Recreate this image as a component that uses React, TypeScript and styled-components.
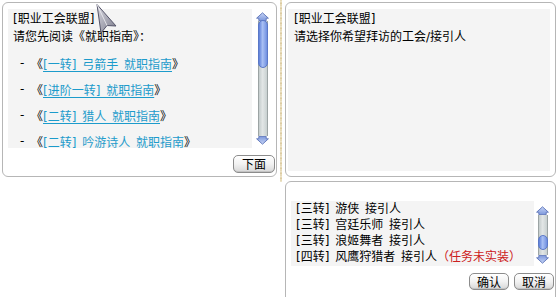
import React from "react";
import styled, { createGlobalStyle } from "styled-components";

const Global = createGlobalStyle`
  html, body { margin: 0; padding: 0; background: #ffffff; }
  body {
    font-family: "DejaVu Sans", "Noto Sans CJK SC", sans-serif;
    font-size: 12px;
    color: #000;
    word-spacing: 2px;
  }
`;

const Page = styled.div`
  position: relative;
  width: 560px;
  height: 297px;
  overflow: hidden;
  display: flex;
  align-items: flex-start;
  padding-top: 2px;
  box-sizing: border-box;
`;

const Panel = styled.div<{ $w: number; $h: number }>`
  box-sizing: border-box;
  width: ${(p) => p.$w}px;
  height: ${(p) => p.$h}px;
  border: 1px solid #b6b6b6;
  border-radius: 6px;
  background: #ffffff;
  display: flex;
  flex-direction: column;
`;

const LeftPanel = styled(Panel)`
  margin-left: 2px;
  padding: 6px 1px 0 5px;
`;

const Divider = styled.div`
  width: 2px;
  height: 182px;
  margin: -2px 0 0 3px;
  background: repeating-linear-gradient(
    180deg,
    #e2d4ae 0px,
    #f1e9d2 2px,
    #d6c394 3px,
    #eee4c8 5px
  );
`;

const RightCol = styled.div`
  margin-left: 3px;
  display: flex;
  flex-direction: column;
  gap: 4px;
`;

const TopPanel = styled(Panel)`
  padding: 6px 4px 0 2px;
`;

const BottomPanel = styled(Panel)`
  padding: 19px 1px 0 5px;
`;

const Body = styled.div`
  display: flex;
  align-items: flex-start;
`;

const Gray = styled.div<{ $w: number; $h: number; $pl: number }>`
  box-sizing: border-box;
  width: ${(p) => p.$w}px;
  height: ${(p) => p.$h}px;
  background: #f4f4f4;
  padding-left: ${(p) => p.$pl}px;
  overflow: hidden;
`;

const Title = styled.div`
  padding-top: 2px;
  line-height: 17px;
  white-space: nowrap;
`;

const Line = styled.div`
  line-height: 18px;
  white-space: nowrap;
`;

const GuideList = styled.div`
  margin-top: 4px;
  padding-left: 7px;
`;

const GuideItem = styled.div`
  display: flex;
  align-items: center;
  height: 26px;
  white-space: nowrap;
`;

const Dash = styled.span`
  width: 11px;
`;

const Quote = styled.span``;

const GuideLink = styled.a`
  color: #1c9bcb;
  text-decoration: underline;
  text-underline-offset: 2px;
  cursor: pointer;
`;

const ChoiceList = styled.div`
  display: flex;
  flex-direction: column;
`;

const Choice = styled.div`
  line-height: 16px;
  white-space: nowrap;
`;

const Warn = styled.span`
  color: #cc2020;
`;

const Footer = styled.div<{ $mt: number }>`
  display: flex;
  justify-content: flex-end;
  gap: 5px;
  margin-top: ${(p) => p.$mt}px;
`;

const Button = styled.button<{ $w: number; $h: number }>`
  box-sizing: border-box;
  width: ${(p) => p.$w}px;
  height: ${(p) => p.$h}px;
  padding: 0;
  border: 1px solid #8c8c8c;
  border-radius: 5px;
  background: linear-gradient(180deg, #ffffff 0%, #f2f2f2 50%, #d8d8d8 100%);
  box-shadow: inset 0 1px 0 #ffffff, inset 0 -1px 0 #c4c4c4;
  font-family: "Noto Sans CJK SC", sans-serif;
  font-size: 12px;
  line-height: 14px;
  color: #000;
`;

const Scroll = styled.div<{ $h: number; $mt: number; $ml: number }>`
  width: 13px;
  height: ${(p) => p.$h}px;
  margin-top: ${(p) => p.$mt}px;
  margin-left: ${(p) => p.$ml}px;
  display: flex;
  flex-direction: column;
  align-items: center;
`;

const Track = styled.div`
  position: relative;
  box-sizing: border-box;
  flex: 1;
  width: 10px;
  border: 1px solid #9ca4a4;
  border-top: none;
  border-bottom: none;
  background: linear-gradient(90deg, #c4cccc 0%, #e2e6e6 45%, #c8d0d0 100%);
`;

const Thumb = styled.div<{ $top: number; $h: number }>`
  position: absolute;
  left: -1px;
  right: -1px;
  top: ${(p) => p.$top}px;
  height: ${(p) => p.$h}px;
  border: 1px solid #5a78c8;
  border-radius: 5px;
  background: linear-gradient(90deg, #5d7fd8 0%, #a9c0f4 45%, #6f8fe0 100%);
`;

const Cursor = styled.svg`
  position: absolute;
  left: 95px;
  top: 3px;
`;

const Arrow: React.FC<{ up?: boolean }> = ({ up }) => (
  <svg width="13" height="9" viewBox="0 0 13 9" style={{ display: "block", transform: up ? undefined : "scaleY(-1)" }}>
    <defs>
      <linearGradient id="arrG" x1="0" y1="0" x2="0" y2="1">
        <stop offset="0" stopColor="#c6d4f6" />
        <stop offset="1" stopColor="#7d98dc" />
      </linearGradient>
    </defs>
    <path d="M6.5 0.8 L12.4 6.2 L10.2 6.2 L10.2 8.6 L2.8 8.6 L2.8 6.2 L0.6 6.2 Z" fill="url(#arrG)" stroke="#5b73b8" strokeWidth="0.9" strokeLinejoin="round" />
  </svg>
);

const ScrollBar: React.FC<{ h: number; mt: number; ml: number; thumbTop: number; thumbH: number }> = ({ h, mt, ml, thumbTop, thumbH }) => (
  <Scroll $h={h} $mt={mt} $ml={ml}>
    <Arrow up />
    <Track>
      <Thumb $top={thumbTop} $h={thumbH} />
    </Track>
    <Arrow />
  </Scroll>
);

const guides = ["[一转] 弓箭手 就职指南", "[进阶一转] 就职指南", "[二转] 猎人 就职指南", "[二转] 吟游诗人 就职指南"];

const choices = ["[三转] 游侠 接引人", "[三转] 宫廷乐师 接引人", "[三转] 浪姬舞者 接引人"];

export default function App() {
  return (
    <>
      <Global />
      <Page>
        <LeftPanel $w={275} $h={175}>
          <Body>
            <Gray $w={244} $h={139} $pl={5}>
              <Title>[职业工会联盟]</Title>
              <Line>请您先阅读《就职指南》：</Line>
              <GuideList>
                {guides.map((g) => (
                  <GuideItem key={g}>
                    <Dash>-</Dash>
                    <Quote>《</Quote>
                    <GuideLink>{g}</GuideLink>
                    <Quote>》</Quote>
                  </GuideItem>
                ))}
              </GuideList>
            </Gray>
            <ScrollBar h={133} mt={3} ml={4} thumbTop={-1} thumbH={46} />
          </Body>
          <Footer $mt={7}>
            <Button $w={42} $h={18}>下面</Button>
          </Footer>
        </LeftPanel>
        <Divider />
        <RightCol>
          <TopPanel $w={271} $h={175}>
            <Gray $w={262} $h={162} $pl={6}>
              <Title>[职业工会联盟]</Title>
              <Line>请选择你希望拜访的工会/接引人</Line>
            </Gray>
          </TopPanel>
          <BottomPanel $w={271} $h={130}>
            <Body>
              <Gray $w={243} $h={65} $pl={5}>
                <ChoiceList>
                  {choices.map((c) => (
                    <Choice key={c}>{c}</Choice>
                  ))}
                  <Choice>
                    [四转] 风鹰狩猎者 接引人<Warn>（任务未实装）</Warn>
                  </Choice>
                </ChoiceList>
              </Gray>
              <ScrollBar h={58} mt={5} ml={2} thumbTop={20} thumbH={13} />
            </Body>
            <Footer $mt={7}>
              <Button $w={40} $h={17}>确认</Button>
              <Button $w={40} $h={17}>取消</Button>
            </Footer>
          </BottomPanel>
        </RightCol>
        <Cursor width="24" height="32" viewBox="0 0 24 32">
          <defs>
            <linearGradient id="curG" x1="0" y1="0" x2="1" y2="1">
              <stop offset="0" stopColor="#d8d8e0" />
              <stop offset="1" stopColor="#7c7c8c" />
            </linearGradient>
          </defs>
          <path d="M2 1.5 L21 23 L12 22.5 L6 30 Z" fill="url(#curG)" stroke="#55556a" strokeWidth="1" strokeLinejoin="round" />
          <path d="M2 1.5 L12 22.5" stroke="#f0f0f4" strokeWidth="0.8" />
        </Cursor>
      </Page>
    </>
  );
}
